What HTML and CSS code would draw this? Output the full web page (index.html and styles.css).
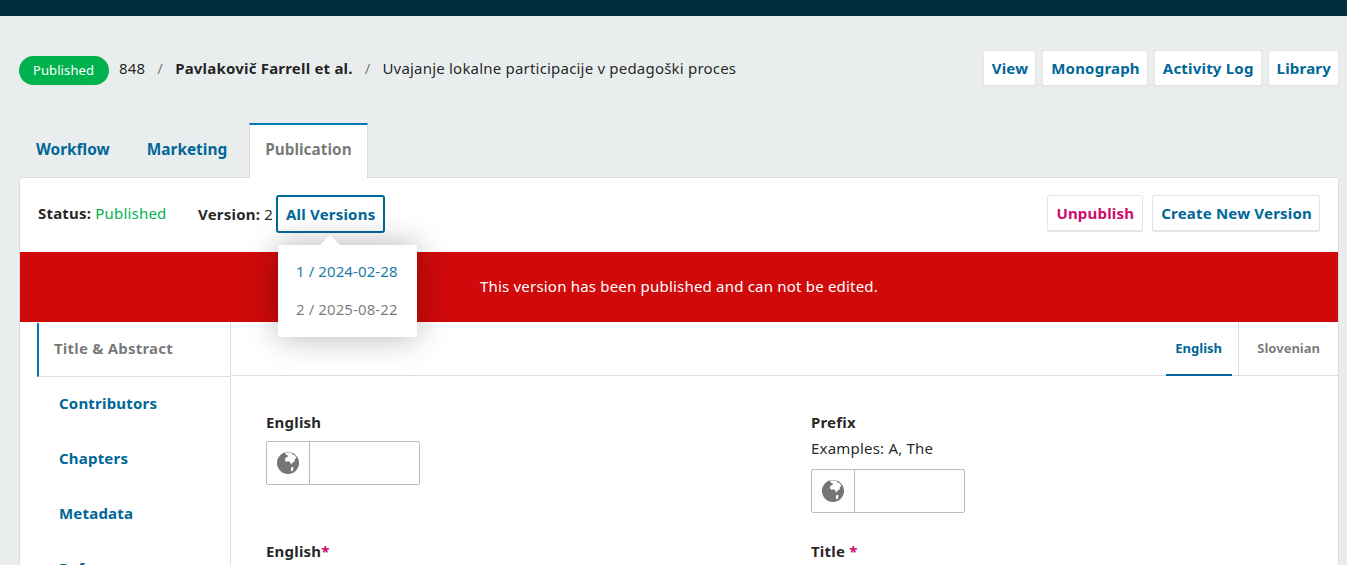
FILE: index.html
```html
<!DOCTYPE html>
<html lang="en">
<head>
<meta charset="utf-8">
<title>Publication</title>
<link rel="stylesheet" href="styles.css">
</head>
<body>
<div class="topbar"></div>
<main class="page">
  <header class="head">
    <div class="crumbs">
      <span class="pill">Published</span>
      <span class="id">848</span>
      <span class="sep">/</span>
      <strong class="authors">Pavlakovič Farrell et al.</strong>
      <span class="sep">/</span>
      <span class="booktitle">Uvajanje lokalne participacije v pedagoški proces</span>
    </div>
    <nav class="actions">
      <a class="btn">View</a>
      <a class="btn">Monograph</a>
      <a class="btn">Activity Log</a>
      <a class="btn">Library</a>
    </nav>
  </header>
  <nav class="tabs">
    <a class="tab">Workflow</a>
    <a class="tab">Marketing</a>
    <a class="tab current">Publication</a>
  </nav>
  <section class="panel">
    <div class="statusbar">
      <div class="status"><b>Status:</b> <span class="green">Published</span></div>
      <div class="version"><b>Version:</b> 2</div>
      <div class="dropwrap">
        <a class="btn focus">All Versions</a>
        <div class="menu">
          <span class="arrow"></span>
          <a class="menuitem link">1 / 2024-02-28</a>
          <a class="menuitem">2 / 2025-08-22</a>
        </div>
      </div>
      <div class="spacer"></div>
      <a class="btn tall danger">Unpublish</a>
      <a class="btn tall">Create New Version</a>
    </div>
    <div class="alert">This version has been published and can not be edited.</div>
    <div class="body">
      <aside class="side">
        <a class="sideitem current">Title &amp; Abstract</a>
        <a class="sideitem">Contributors</a>
        <a class="sideitem">Chapters</a>
        <a class="sideitem">Metadata</a>
        <a class="sideitem">References</a>
      </aside>
      <div class="content">
        <div class="locales">
          <a class="locale active">English</a>
          <a class="locale">Slovenian</a>
        </div>
        <form class="form">
          <div class="field">
            <label class="label">English</label>
            <div class="input">
              <span class="globe">
                <svg viewBox="0 0 24 24" width="22" height="22"><circle cx="12" cy="12" r="12" fill="#757575"/><path fill="#fff" d="M8.500 1c2.500-.7 5.500-.7 7.500 0l1 2 2.500.5 1.500 3-1.500 1.500-.5 2.500-2 1-1.500 2.500-1-2.500-2-1.500-2.500.5-1.500-2 1-2.500 2-.5.500-1.500-2-1zM16 16l2 .5-.5 3-1.500 2-1-2.500z"/></svg>
              </span>
              <span class="blank"></span>
            </div>
          </div>
          <div class="field">
            <label class="label">Prefix</label>
            <div class="hint">Examples: A, The</div>
            <div class="input">
              <span class="globe">
                <svg viewBox="0 0 24 24" width="22" height="22"><circle cx="12" cy="12" r="12" fill="#757575"/><path fill="#fff" d="M8.500 1c2.500-.7 5.500-.7 7.500 0l1 2 2.500.5 1.500 3-1.500 1.500-.5 2.500-2 1-1.500 2.500-1-2.500-2-1.500-2.500.5-1.500-2 1-2.500 2-.5.500-1.500-2-1zM16 16l2 .5-.5 3-1.500 2-1-2.500z"/></svg>
              </span>
              <span class="blank"></span>
            </div>
          </div>
          <div class="field">
            <label class="label">English<span class="req">*</span></label>
          </div>
          <div class="field">
            <label class="label">Title <span class="req">*</span></label>
          </div>
        </form>
      </div>
    </div>
  </section>
</main>
</body>
</html>
```
FILE: styles.css
```css
* { box-sizing: border-box; }
html, body { margin: 0; height: 565px; overflow: hidden; }
body {
  background: #eaedee;
  font-family: "Noto Sans", sans-serif;
  font-size: 15px;
  letter-spacing: 0.2px;
  line-height: 20px;
  color: rgba(0, 0, 0, 0.87);
}
a { text-decoration: none; }

.topbar { height: 16px; background: #002c40; }
.page { padding: 0 8px 0 19px; }

.head {
  display: flex;
  justify-content: space-between;
  align-items: flex-start;
  padding-top: 34px;
  height: 107px;
}
.crumbs { display: flex; align-items: center; height: 29px; margin-top: 6px; line-height: 26px; }
.pill {
  width: 90px;
  height: 29px;
  padding-right: 1px;
  border-radius: 15px;
  background: #00b24e;
  color: #fff;
  font-size: 13px;
  letter-spacing: 0.1px;
  line-height: 28px;
  text-align: center;
  margin-right: 10px;
}
.id, .sep, .authors, .booktitle { padding-bottom: 5px; }
.sep { color: rgba(0, 0, 0, 0.54); margin: 0 12px; }
.authors { font-weight: 700; }

.actions { display: flex; gap: 6px; }
.btn {
  display: inline-block;
  height: 37px;
  padding: 0 8px;
  background: #fff;
  border: 1px solid rgba(0, 0, 0, 0.1);
  border-bottom-width: 2px;
  border-radius: 3px;
  color: #006798;
  font-weight: 700;
  line-height: 35px;
  white-space: nowrap;
}
.actions .btn { padding-right: 7px; }

.tabs { display: flex; height: 54px; padding-left: 1px; }
.tab {
  padding: 0 16px;
  margin-right: 5px;
  color: #006798;
  font-weight: 700;
  font-size: 15.4px;
  letter-spacing: 0;
  line-height: 54px;
}
.tab.current {
  background: #fff;
  color: rgba(0, 0, 0, 0.54);
  border-top: 2px solid #007ab2;
  border-left: 1px solid #ddd;
  border-right: 1px solid #ddd;
  line-height: 50px;
  padding: 0 15px;
  margin: 0 0 -1px 1px;
  position: relative;
  z-index: 1;
}

.panel {
  background: #fff;
  border: 1px solid #ddd;
  border-radius: 2px 2px 0 0;
  height: 400px;
}
.statusbar {
  display: flex;
  align-items: center;
  height: 73px;
  padding: 0 18px 2px 18px;
}
.status { width: 160px; padding-bottom: 1px; }
.status b, .version b { font-weight: 700; }
.green { color: #00b24e; }
.version { margin-right: 3px; }
.dropwrap { position: relative; }
.btn.focus {
  height: 38px;
  border: 2px solid #006798;
  line-height: 35px;
  border-radius: 3px;
}
.spacer { flex: 1; }
.btn.tall { margin-left: 9px; line-height: 34px; padding-right: 7px; }
.btn.danger { color: #d00a6c; padding-right: 8px; }

.menu {
  position: absolute;
  top: 50px;
  left: 2px;
  width: 139px;
  height: 92px;
  padding: 8px 0;
  background: #fff;
  border-radius: 2px;
  box-shadow: 0 0 32px rgba(0, 0, 0, 0.3);
  z-index: 5;
}
.arrow {
  position: absolute;
  top: -10px;
  left: 42px;
  width: 0;
  height: 0;
  border-left: 10px solid transparent;
  border-right: 10px solid transparent;
  border-bottom: 10px solid #fff;
}
.menuitem {
  display: block;
  height: 38px;
  padding-left: 18px;
  line-height: 36px;
  letter-spacing: 0.1px;
  color: rgba(0, 0, 0, 0.54);
  white-space: nowrap;
}
.menuitem.link { color: #1e7ba6; }

.alert {
  height: 70px;
  background: #d00a0a;
  color: #fff;
  text-align: center;
  line-height: 69px;
  margin-top: 1px;
}

.body { display: flex; height: 260px; }
.side { width: 211px; padding: 0 0 0 17px; flex: none; border-right: 1px solid #ddd; }
.sideitem {
  display: block;
  height: 55px;
  padding-left: 22px;
  color: #006798;
  font-weight: 700;
  line-height: 53px;
  white-space: nowrap;
}
.sideitem.current {
  height: 54px;
  margin: 1px -1px 0 0;
  color: rgba(0, 0, 0, 0.54);
  border-left: 2px solid #007ab2;
  border-bottom: 1px solid #ddd;
  padding-left: 15px;
  line-height: 50px;
  position: relative;
}
.content { flex: 1; min-width: 0; }
.locales {
  display: flex;
  justify-content: flex-end;
  height: 54px;
  border-bottom: 1px solid #ddd;
}
.locale {
  padding: 0 18px;
  font-size: 13px;
  letter-spacing: 0;
  font-weight: 700;
  line-height: 53px;
  color: rgba(0, 0, 0, 0.54);
}
.locale.active {
  width: 66px;
  padding: 0 9px;
  color: #006798;
  height: 54px;
  border-bottom: 2px solid #006798;
  position: relative;
}
.locale:last-child { border-left: 1px solid #ddd; margin-left: 6px; }

.form {
  display: grid;
  grid-template-columns: 545px 1fr;
  grid-template-rows: 121px 60px;
  padding: 36px 0 0 35px;
  row-gap: 8px;
}
.label { display: block; font-weight: 700; line-height: 20px; margin-bottom: 9px; }
.req { color: #d00a6c; }
.hint { margin: -3px 0 11px; line-height: 20px; }
.input {
  display: flex;
  width: 154px;
  height: 44px;
  border: 1px solid #bbb;
  border-radius: 2px;
}
.globe {
  display: flex;
  align-items: center;
  justify-content: center;
  width: 43px;
  border-right: 1px solid #bbb;
}
.blank { flex: 1; }
```
